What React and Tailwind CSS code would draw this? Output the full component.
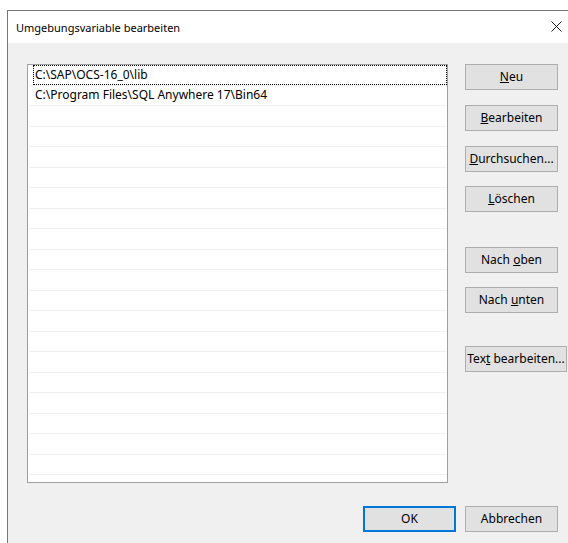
import React from "react";

const font = { fontFamily: '"Segoe UI", "Noto Sans", "Open Sans", sans-serif' };

function Btn({ children, className = "", primary = false }) {
  return (
    <div
      className={
        "flex items-center justify-center h-[26px] bg-[#e1e1e1] text-[12px] text-black leading-none " +
        (primary ? "border-2 border-[#0078d7] " : "border border-[#adadad] ") +
        className
      }
    >
      {children}
    </div>
  );
}

const entries = ["C:\\SAP\\OCS-16_0\\lib", "C:\\Program Files\\SQL Anywhere 17\\Bin64"];

export default function App() {
  const rows = Array.from({ length: 21 }, (_, i) => entries[i] || "");
  return (
    <div className="w-[568px] h-[543px] bg-white overflow-hidden" style={font}>
      <div className="ml-[7px] mt-[10px] w-[600px] h-[560px] border-l border-t border-[#777777] flex flex-col">
        {/* title bar */}
        <div className="h-[32px] bg-white flex items-center pl-[8px] pt-[2px] relative shrink-0">
          <span className="text-[11px] text-black">Umgebungsvariable bearbeiten</span>
          <svg className="absolute left-[543px] top-[10px]" width="11" height="11" viewBox="0 0 11 11">
            <path d="M0.5 0.5 L10.5 10.5 M10.5 0.5 L0.5 10.5" stroke="#1a1a1a" strokeWidth="1" fill="none" />
          </svg>
        </div>
        {/* client area */}
        <div className="flex-1 bg-[#f0f0f0] pl-[19px] pt-[21px]">
          <div className="flex">
            <div className="w-[421px] h-[419px] border border-[#a0a0a0] bg-white pl-[2px] overflow-hidden">
              {rows.map((t, i) => (
                <div
                  key={i}
                  className="relative h-[20.5px] border-b border-[#f0f0f0] flex items-center pl-[5px] text-[12px] text-black leading-none whitespace-nowrap"
                >
                  {t}
                  {i === 0 && (
                    <div className="absolute top-0 bottom-0 left-[3px] right-[0px] border border-dotted border-black" />
                  )}
                </div>
              ))}
            </div>
            <div className="ml-[17px] flex flex-col">
              <Btn className="w-[93px]">
                <span><u>N</u>eu</span>
              </Btn>
              <Btn className="w-[93px] mt-[15px]">
                <span><u>B</u>earbeiten</span>
              </Btn>
              <Btn className="w-[93px] mt-[15px]">
                <span><u>D</u>urchsuchen...</span>
              </Btn>
              <Btn className="w-[93px] mt-[14px]">
                <span><u>L</u>öschen</span>
              </Btn>
              <Btn className="w-[93px] mt-[35px]">
                <span>Nach <u>o</u>ben</span>
              </Btn>
              <Btn className="w-[93px] mt-[14px]">
                <span>Nach <u>u</u>nten</span>
              </Btn>
              <Btn className="w-[102px] mt-[33px]">
                <span>Tex<u>t</u> bearbeiten...</span>
              </Btn>
            </div>
          </div>
          <div className="flex ml-[336px] mt-[23px] gap-[9px]">
            <Btn primary className="w-[93px]">OK</Btn>
            <Btn className="w-[93px]">Abbrechen</Btn>
          </div>
        </div>
      </div>
    </div>
  );
}
